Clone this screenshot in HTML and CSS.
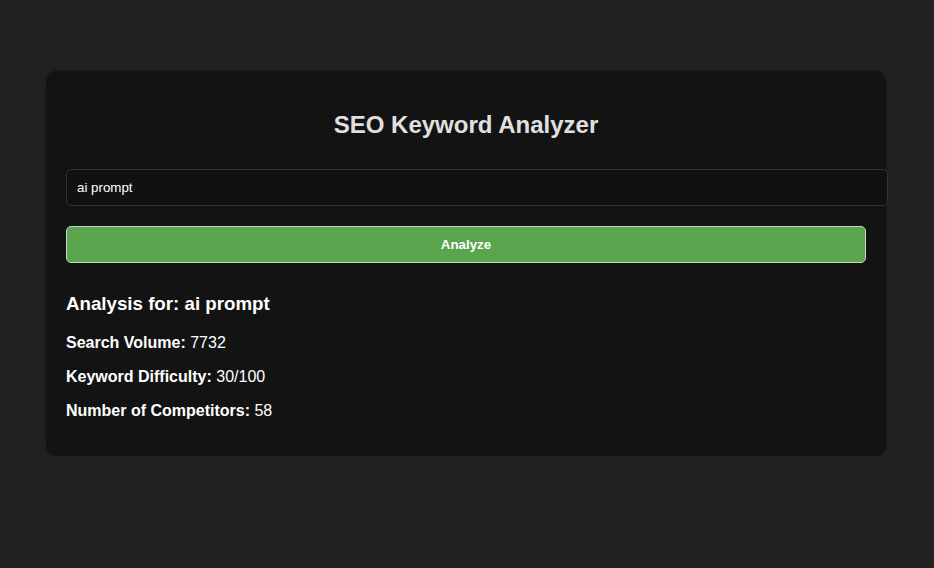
FILE: index.html
```html
<!DOCTYPE html>
<html lang="en">
<head>
<meta charset="utf-8">
<title>SEO Keyword Analyzer</title>
<link rel="stylesheet" href="styles.css">
</head>
<body>
<main class="card">
  <h1 class="title">SEO Keyword Analyzer</h1>
  <input class="keyword-input" type="text" value="ai prompt">
  <button class="analyze-btn" type="button">Analyze</button>
  <section class="results">
    <h3 class="results-title">Analysis for: ai prompt</h3>
    <p class="metric"><strong>Search Volume:</strong> 7732</p>
    <p class="metric"><strong>Keyword Difficulty:</strong> 30/100</p>
    <p class="metric"><strong>Number of Competitors:</strong> 58</p>
  </section>
</main>
</body>
</html>
```
FILE: styles.css
```css
html, body {
  margin: 0;
  padding: 0;
}
body {
  background: #222222;
  font-family: "Liberation Sans", Arial, sans-serif;
  color: #ffffff;
  padding: 71px 2px 0 0;
}
.card {
  display: block;
  max-width: 800px;
  margin: 0 auto;
  padding: 20px;
  background: #131313;
  border-radius: 10px;
  box-shadow: 0 0 10px rgba(0, 0, 0, 0.25);
}
.title {
  margin: 20px 0 30px;
  font-size: 24px;
  font-weight: bold;
  text-align: center;
  color: #e0e0e0;
}
.keyword-input {
  display: block;
  width: 100%;
  box-sizing: content-box;
  margin: 0 0 20px;
  padding: 10px;
  border: 1px solid #333333;
  border-radius: 5px;
  background: #111111;
  color: #ffffff;
  font-family: "Liberation Sans", Arial, sans-serif;
  font-size: 13.333px;
  outline: none;
}
.analyze-btn {
  display: block;
  width: 100%;
  box-sizing: border-box;
  margin: 0;
  padding: 10px;
  border: 1px solid #cccccc;
  border-radius: 5px;
  background: #5ba44e;
  color: #ffffff;
  font-family: "Liberation Sans", Arial, sans-serif;
  font-size: 13.333px;
  font-weight: bold;
}
.results {
  margin-top: 30px;
}
.results-title {
  margin: 0 0 18.72px;
  font-size: 18.72px;
  font-weight: bold;
}
.metric {
  margin: 16px 0;
  font-size: 16px;
}
```
